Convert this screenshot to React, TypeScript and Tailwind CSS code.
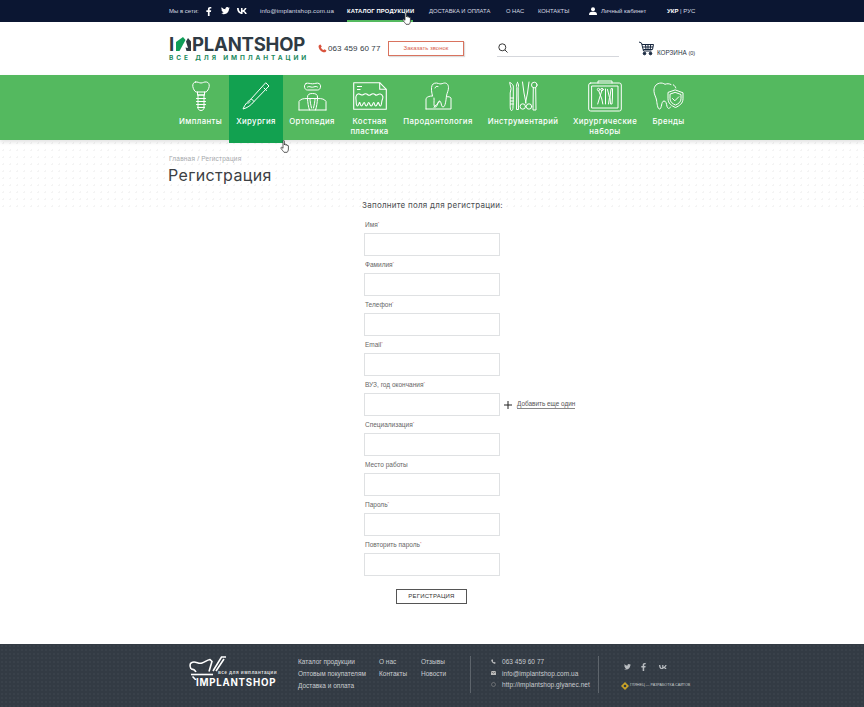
import React from "react";

const S = { fill: "none", stroke: "#fff", strokeWidth: 1, strokeLinecap: "round" as const, strokeLinejoin: "round" as const };

const Fb = ({ c = "#fff", h = 10 }: { c?: string; h?: number }) => (
  <svg width={h * 0.6} height={h} viewBox="0 0 6 10"><path fill={c} d="M4 10V5.500h1.500L5.800 3.700H4V2.600c0-.5.2-.9.9-.9h1V.1C5.700.1 5.100 0 4.500 0 3.100 0 2.100.9 2.100 2.400v1.300H.4v1.800h1.700V10z" /></svg>
);
const Tw = ({ c = "#fff", w = 9 }: { c?: string; w?: number }) => (
  <svg width={w} height={w * 0.82} viewBox="0 0 24 20"><path fill={c} d="M24 2.400a9.800 9.800 0 0 1-2.800.8A4.900 4.900 0 0 0 23.300.5a9.800 9.800 0 0 1-3.100 1.200 4.900 4.900 0 0 0-8.400 4.500A14 14 0 0 1 1.700.9a4.900 4.900 0 0 0 1.500 6.600 4.900 4.900 0 0 1-2.200-.6c0 2.400 1.700 4.400 3.900 4.900a4.900 4.900 0 0 1-2.200.1 4.900 4.900 0 0 0 4.600 3.400A9.900 9.900 0 0 1 0 17.300 14 14 0 0 0 7.500 19.500c9.100 0 14.300-7.700 14-14.600A10 10 0 0 0 24 2.400z" /></svg>
);
const Vk = ({ c = "#fff", w = 10 }: { c?: string; w?: number }) => (
  <svg width={w} height={w * 0.6} viewBox="0 0 20 12"><path fill={c} d="M10.900 12C4.100 12 .2 7.500 0 0h3.400c.1 5.500 2.600 7.800 4.500 8.300V0h3.200v4.700c2-.2 4-2.400 4.700-4.700H19c-.5 2.900-2.700 5-4.200 5.900 1.500.7 4 2.600 4.900 6.100h-3.500c-.8-2.300-2.600-4.100-5.100-4.400V12z" /></svg>
);

const ImplantIcon = () => (
  <svg width="18" height="30" viewBox="0 0 18 30" {...S}>
    <path d="M3.500 1C1.500 1.300.5 3 .8 5.500 1.200 8 2.800 10.500 4 11h10c1.200-.5 2.800-3 3.200-5.500C17.500 3 16.500 1.300 14.500 1 12 .6 11 2 9 2S6 .6 3.500 1z" />
    <path d="M5.500 11v3h7v-3M5.500 14h7" />
    <path d="M6 14v13c0 1 1 2.500 3 2.500s3-1.500 3-2.500V14" />
    <path d="M4.500 17.500h9M4.500 20.500h9M4.500 23.500h9M5.500 26.500h7" />
  </svg>
);
const ScalpelIcon = () => (
  <svg width="28" height="28" viewBox="0 0 28 28" {...S}>
    <path d="M24 1l3 3-15 15.500-2.500-2.500z" />
    <path d="M22 6l2.500 2.500" />
    <path d="M9.500 17C6 19 3 22 1 27c4-1 8-3.500 11-7.500" />
    <path d="M6 21.500l2-2" />
  </svg>
);
const OrthoIcon = () => (
  <svg width="29" height="29" viewBox="0 0 29 29" {...S}>
    <path d="M8 1.500c2-1 4 .3 6.500.3S19 .5 21 1.500c2 1 1.800 3.500 1 5-.5 1-1.500 1.500-2.500 1.500h-10c-1 0-2-.5-2.500-1.500-.8-1.500-1-4 1-5z" />
    <path d="M9.500 5c2-1.300 3 .4 5 .2s3-1.500 5-.2" />
    <path d="M9.500 15c0-2.500 1.500-3.500 5-3.500s5 1 5 3.500v1.500h-10z" />
    <path d="M1 28v-8.500c1.500-2.500 4-3 8.500-3 .3 4 .7 8 2 11.500M28 28v-8.500c-1.500-2.500-4-3-8.500-3-.3 4-.7 8-2 11.500M1 28h27" />
    <path d="M12 16.500c0 3 .8 6.500 1.500 9.500M17 16.500c0 3-.8 6.500-1.500 9.500" />
  </svg>
);
const BoneIcon = () => (
  <svg width="34" height="28" viewBox="0 0 34 28" fill="none" stroke="#fff" strokeWidth="1.100" strokeLinejoin="round">
    <path d="M.7.7h26l6.600 6.600v20H.7z" />
    <path d="M26.700.7v6.600h6.600M4 4.500h5M4 7.500h3.500" />
    <path d="M3 14.500c.7-3 3-3 4.500-2s2 .8 3 0 3-1 4 0 2.500.8 3.500 0 3-1 4 0 2 .8 3 0 3.800-1 4.800 2c.5 2-.8 3-1 5-.2 2-.5 4.500-1.500 4.500s-1.300-3-2-3.500-1.200 3.500-2.600 3.500-1-3.500-2-3.500-1 3.500-2.500 3.500-1.500-3.500-2.500-3.500-1 3.500-2.500 3.500-1-3.500-2-3.500-1.500 3.500-2.800 3.500-1-3-1.700-3.500-1 3.500-2 3.500-1.500-2.500-1.500-4.500S2.500 16.500 3 14.500z" />
  </svg>
);
const ParoIcon = () => (
  <svg width="27" height="28" viewBox="0 0 27 28" {...S}>
    <path d="M1 27V16.500c1.500-2 4-2.500 6-2.500M1 27h25V16c-1-1.200-2.500-1.500-4-1.200" />
    <path d="M7.500 14C6.500 10 6 6 7 3.500 8 1 11 .5 13.500 1.500c2 .8 3 .3 5-.3 2.800-.8 5 1 5 4.500 0 3-1.500 5-2 8.300-.5 3.500-1 11-3.500 11-2 0-1.500-6-3.500-6s-2 6-4 6c-2.500 0-1-6-1.500-9" />
    <path d="M10 6c.5-1.500 1.500-2 3-1.500" />
    <path d="M9 25.500c1-2.500 4-3 5.500-6" />
  </svg>
);
const ToolsIcon = () => (
  <svg width="29" height="30" viewBox="0 0 29 30" {...S}>
    <path d="M1 1.500c1 .3 2 1.300 2.500 2l.8 1.500v10l-.3 11c0 2-.5 3.500-1.500 3.500s-1.300-2-1.300-4V12L2 8z" />
    <path d="M1.500 17h3M1.500 20h3M1.500 23h3" />
    <path d="M8.500 1.500c1.200 1.500 1.300 3.500.7 5v7.500l.3 14.500H7.500L7.800 14V6.500C7.300 5 7.500 3 8.500 1.500z" />
    <path d="M13.500 1l1.500 11 2 10M20 1l-1.500 11-2 10" />
    <circle cx="13.800" cy="25.500" r="2.700" /><circle cx="20" cy="25.500" r="2.700" />
    <circle cx="25.300" cy="4" r="2.800" /><path d="M24.300 7l-.3 22h3l-.3-22" />
  </svg>
);
const KitIcon = () => (
  <svg width="34" height="32" viewBox="0 0 34 32" {...S}>
    <rect x=".7" y="3" width="32.600" height="28" rx="2" />
    <path d="M10 3V1h14v2" />
    <rect x="4" y="6" width="26" height="22" />
    <circle cx="10.500" cy="9.500" r="1.200" /><circle cx="14" cy="9.500" r="1.200" />
    <path d="M10.800 11l3 8 1 5M13.700 11l-2.500 8-1.500 5M17.500 9v15M19.500 9.500l2 8-1 6.500M24.500 9v8l-.5 7h-1.500l-.5-7 1-8z" />
  </svg>
);
const BrandIcon = () => (
  <svg width="31" height="28" viewBox="0 0 31 28" {...S}>
    <path d="M18 2.500C16 1.500 14 1.500 12 2.300 10.500 1.300 8.500.7 6.500 1.200 2.500 2 .7 5.500 1 9.500c.3 3.500 2 5.500 2.500 8.500.5 3 1 9 3 9 2.500 0 1.500-8 4.500-8 2 0 2.500 2.500 3 5.500 1 2.500 2.500 2.500 3.500.5" />
    <path d="M22.800 6c-.5-1.500-1.300-2.500-2.500-3.200" />
    <path d="M22.500 8l7.500 2.800v6c0 4.500-3.500 7-7.500 8.700-4-1.700-7.500-4.200-7.500-8.700v-6z" />
    <path d="M22.500 10.500l5.500 2v4.300c0 3-2.500 5-5.500 6.300-3-1.300-5.500-3.300-5.500-6.300v-4.300z" />
    <path d="M19.500 16.500l2.300 2.300 4-4" />
  </svg>
);
const Hand = () => (
  <svg width="11" height="13" viewBox="0 0 11 13">
    <path fill="#fff" stroke="#333" strokeWidth=".8" d="M3 1.200c0-.9 1.400-.9 1.400 0V5l.1-.6c0-.7 1.200-.7 1.300 0v.8c0-.7 1.200-.7 1.300 0v.6c0-.7 1.300-.7 1.300.2V9c0 1.500-.8 2.800-1.200 3.300H4c-.5-.8-2.500-3-3-4-.4-.8.500-1.300 1.100-.8L3 8.300z" />
  </svg>
);

const navItems: { label: React.ReactNode; w: string; icon: React.ReactNode; active?: boolean }[] = [
  { label: "Импланты", w: "w-[57px]", icon: <ImplantIcon /> },
  { label: "Хирургия", w: "w-[54px]", icon: <ScalpelIcon />, active: true },
  { label: "Ортопедия", w: "w-[58px]", icon: <OrthoIcon /> },
  { label: <>Костная<br />пластика</>, w: "w-[57px]", icon: <BoneIcon /> },
  { label: "Пародонтология", w: "w-[80px]", icon: <ParoIcon /> },
  { label: "Инструментарий", w: "w-[90px]", icon: <ToolsIcon /> },
  { label: <>Хирургические<br />наборы</>, w: "w-[74px]", icon: <KitIcon /> },
  { label: "Бренды", w: "w-[53px]", icon: <BrandIcon /> },
];

const fields: { label: string; star?: boolean; add?: boolean }[] = [
  { label: "Имя", star: true },
  { label: "Фамилия", star: true },
  { label: "Телефон", star: true },
  { label: "Email", star: true },
  { label: "ВУЗ, год окончания", star: true, add: true },
  { label: "Специализация", star: true },
  { label: "Место работы" },
  { label: "Пароль", star: true },
  { label: "Повторить пароль", star: true },
];

export default function App() {
  return (
    <div className="w-[864px] h-[707px] overflow-hidden bg-white flex flex-col font-['Liberation_Sans',sans-serif] relative">
      {/* top bar */}
      <div className="h-[22px] bg-[#0b1632] shrink-0 flex items-center pl-[169px] text-[#d6dae3] text-[6px]">
        <span className="w-[30px]">Мы в сети:</span>
        <span className="w-[16px] ml-[2px] flex justify-center"><Fb h={9} /></span>
        <span className="w-[16px] flex justify-center"><Tw w={9} /></span>
        <span className="w-[18px] flex justify-center"><Vk w={10} /></span>
        <span className="ml-[9px] w-[87px] text-[6.200px] tracking-[0.1px]">info@implantshop.com.ua</span>
        <span className="relative w-[82px] h-[22px] flex items-center font-bold text-white text-[5.800px] tracking-[0.15px]">
          КАТАЛОГ ПРОДУКЦИИ
          <span className="absolute left-0 bottom-0 w-[66px] h-[2px] bg-[#54b95f]" />
        </span>
        <span className="w-[77px] text-[5.800px]">ДОСТАВКА И ОПЛАТА</span>
        <span className="w-[32px] text-[5.800px]">О НАС</span>
        <span className="w-[51px] text-[5.800px]">КОНТАКТЫ</span>
        <svg width="8" height="8" viewBox="0 0 8 8" className="mr-[4px]"><circle cx="4" cy="2.200" r="2" fill="#fff" /><path fill="#fff" d="M0 8c0-2.500 1-3 3-3.300h2C7 5 8 5.500 8 8z" /></svg>
        <span className="w-[66px] text-[6px]">Личный кабинет</span>
        <span className="text-[6px] text-[#d6dae3]"><b className="text-white">УКР</b> | РУС</span>
      </div>

      {/* header */}
      <div className="h-[53px] shrink-0 flex items-center pl-[169px]">
        <div className="w-[149px] flex flex-col mt-[1px]">
          <div className="flex items-center h-[16px] text-[#2f3b44] font-['Inter',sans-serif] font-bold text-[18.500px] leading-none tracking-[-0.2px]">
            <span>I</span>
            <svg width="15" height="14" viewBox="0 0 15 14" className="ml-[2px] mr-[1px]">
              <path fill="#0f9d58" d="M0 14V5L7 0l2.500 3L3.500 14z" />
              <path fill="#2f3b44" d="M10 4.500L12 1l3 3.500V14h-4.500l-1-3.500L12 11z" />
            </svg>
            <span>PLANTSHOP</span>
          </div>
          <div className="text-[#1c8a60] font-bold text-[6.500px] leading-[8px] mt-[2px] tracking-[2.900px] whitespace-nowrap font-['Inter',sans-serif]">ВСЕ ДЛЯ ИМПЛАНТАЦИИ</div>
        </div>
        <svg width="9" height="9" viewBox="0 0 24 24" className="mr-[1px]"><path fill="#d9533d" d="M6.600 1.500l3.500 5-2.300 2.500c1 2.800 4.400 6.300 7.200 7.300l2.500-2.300 5 3.500c-.5 3-3 5-5.500 4.800C9 21.500 2.500 14 1.500 7 1.300 4.500 3.500 2 6.600 1.500z" /></svg>
        <span className="w-[60px] text-[8px] text-[#33393f] tracking-[0.1px]">063 459 60 77</span>
        <span className="w-[76px] h-[15px] border border-[#d9735f] shadow-[1px_1px_1px_#ddd] flex items-center justify-center text-[6px] text-[#d9654f]">Заказать звонок</span>
        <div className="ml-[33px] w-[122px] h-[16px] border-b border-[#d5d7dc] flex items-center pl-[1px]">
          <svg width="10" height="10" viewBox="0 0 10 10" fill="none" stroke="#222" strokeWidth=".9"><circle cx="4.300" cy="4.300" r="3.500" /><path d="M7 7l2.500 2.500" /></svg>
        </div>
        <svg width="15" height="15" viewBox="0 0 15 15" className="ml-[20px]" fill="none" stroke="#15253d" strokeWidth="1">
          <path d="M0 1l2.500 1 2 8h8" />
          <path d="M3 3.500h11.500l-1 5H4.300M6.500 3.500l.5 5M9 3.500v5M11.700 3.500l-.5 5M3.500 6h10.500" />
          <circle cx="5.500" cy="12.500" r="1.300" fill="#15253d" /><circle cx="11.500" cy="12.500" r="1.300" fill="#15253d" />
        </svg>
        <span className="ml-[3px] mt-[8px] text-[6.300px] text-[#2a3444] whitespace-nowrap">КОРЗИНА <span className="text-[5.500px]">(0)</span></span>
      </div>

      {/* nav */}
      <div className="h-[65px] bg-[#54b95f] shrink-0 flex pl-[172px] shadow-[0_2px_4px_rgba(0,0,0,0.12)] relative z-10">
        {navItems.map((n, i) => (
          <div key={i} className={`${n.w} shrink-0 flex flex-col items-center ${n.active ? "bg-[#12a150] h-[68px]" : "h-[65px]"}`}>
            <div className="h-[38px] flex items-center justify-center mt-[2px]">{n.icon}</div>
            <div className="text-white text-center font-['Inter',sans-serif] font-medium text-[7.800px] leading-[10px] tracking-[0.35px] whitespace-nowrap mt-[1px]">{n.label}</div>
          </div>
        ))}
      </div>

      {/* main */}
      <div className="flex-1 relative flex flex-col">
        <div className="absolute inset-x-0 top-0 h-[70px] bg-[radial-gradient(#f4f4f4_1px,transparent_1px)] bg-[length:7px_7px]" />
        <div className="relative pl-[169px] pt-[15px]">
          <div className="text-[6.500px] leading-[8px] text-[#a5a8ab] tracking-[0.2px]">Главная / Регистрация</div>
          <h1 className="text-[16px] leading-[20px] mt-[2px] -ml-[1px] text-[#3c4043] tracking-[0.35px] font-['Inter',sans-serif] font-normal">Регистрация</h1>
        </div>
        <div className="relative pl-[362px] mt-[15px]">
          <div className="text-[8px] leading-[10px] text-[#4a4d50] tracking-[0.25px] font-['Inter',sans-serif]">Заполните поля для регистрации:</div>
          <div className="flex flex-col gap-[4px] mt-[11px] pl-[2px]">
            {fields.map((f) => (
              <div key={f.label} className="flex flex-col h-[36px]">
                <div className="text-[6.500px] leading-[8px] text-[#666] pl-[1px] mb-[4px]">{f.label}{f.star && <sup className="text-[#c66] text-[4px]">*</sup>}</div>
                <div className="flex items-center">
                  <div className="w-[136px] h-[23px] border border-[#dfe1e3] bg-white" />
                  {f.add && (
                    <>
                      <svg width="8" height="8" viewBox="0 0 8 8" className="ml-[4px]"><path d="M4 0v8M0 4h8" stroke="#222" strokeWidth="1" /></svg>
                      <span className="ml-[5px] text-[6.400px] leading-[8px] text-[#555] border-b border-[#888]">Добавить еще один</span>
                    </>
                  )}
                </div>
              </div>
            ))}
          </div>
          <div className="mt-[12px] ml-[34px] w-[71px] h-[15px] border border-[#555] flex items-center justify-center text-[6px] text-[#333] tracking-[0.2px]">РЕГИСТРАЦИЯ</div>
        </div>
      </div>

      {/* footer */}
      <div className="h-[63px] shrink-0 bg-[#333b44] bg-[radial-gradient(#39414a_1px,transparent_1px)] bg-[length:4px_4px] flex pl-[188px] text-[#c9ccd0] text-[6.500px]">
        <div className="w-[110px] pt-[12px] relative">
          <svg width="40" height="24" viewBox="0 0 40 24" fill="none" stroke="#fff" strokeWidth="1.600" className="block">
            <path d="M3 13C1 9 2 6 6 6c3 0 5 2 8 1s5-3 8-3.500l2 2c-1 3-2 7-3 10" />
            <path d="M3 13c2 0 4 1 5 3" />
            <path d="M25 15L33.500 1H38M28 15L36 3" />
            <path d="M3 18.500h22" />
            <path d="M4.500 20.500l3.500 3.500" />
          </svg>
          <div className="absolute left-[30px] top-[26px] text-[4.700px] leading-[6px] font-bold tracking-[0.45px] text-[#ddd] whitespace-nowrap">все для имплантации</div>
          <div className="absolute left-[8px] top-[33px] text-[9.700px] leading-[12px] font-bold tracking-[0.75px] text-white whitespace-nowrap font-['Inter',sans-serif]">IMPLANTSHOP</div>
        </div>
        <div className="w-[81px] pt-[12px] leading-[12px]">
          <div>Каталог продукции</div><div>Оптовым покупателям</div><div>Доставка и оплата</div>
        </div>
        <div className="w-[42px] pt-[12px] leading-[12px]"><div>О нас</div><div>Контакты</div></div>
        <div className="w-[49px] pt-[12px] leading-[12px]"><div>Отзывы</div><div>Новости</div></div>
        <div className="mt-[12px] h-[37px] w-[128px] border-l border-l-[#5d646b] pl-[20px] leading-[11.500px] tracking-[0.05px]">
          <div className="flex items-center gap-[6px]"><svg width="5" height="5" viewBox="0 0 24 24"><path fill="#ccc" d="M6.600 1.500l3.500 5-2.300 2.500c1 2.800 4.400 6.300 7.200 7.300l2.500-2.300 5 3.500c-.5 3-3 5-5.500 4.800C9 21.500 2.500 14 1.500 7 1.300 4.500 3.500 2 6.600 1.500z" /></svg>063 459 60 77</div>
          <div className="flex items-center gap-[6px]"><svg width="5" height="4" viewBox="0 0 5 4"><rect width="5" height="4" fill="#bbb" /><path d="M0 .5l2.500 1.700L5 .5" stroke="#333" strokeWidth=".5" fill="none" /></svg>info@implantshop.com.ua</div>
          <div className="flex items-center gap-[6px]"><svg width="5" height="5" viewBox="0 0 10 10" fill="none" stroke="#999"><circle cx="5" cy="5" r="4" /></svg>http://implantshop.glyanec.net</div>
        </div>
        <div className="mt-[12px] h-[37px] border-l border-l-[#5d646b] pl-[25px] flex flex-col">
          <div className="flex items-center h-[22px]">
            <span className="w-[17px]"><Tw c="#b8bcc0" w={7} /></span>
            <span className="w-[18px]"><Fb c="#b8bcc0" h={8} /></span>
            <span><Vk c="#b8bcc0" w={8} /></span>
          </div>
          <div className="flex items-center -ml-[3px] mt-[4px] text-[3.700px] text-[#c6c9cc] whitespace-nowrap">
            <svg width="8" height="8" viewBox="0 0 8 8" className="mr-[1px]"><path d="M4 0l4 4-4 4-4-4z" fill="#c9a227" /><circle cx="4" cy="4" r="1.300" fill="#333b44" /></svg>
            ГЛЯНЕЦ — РАЗРАБОТКА САЙТОВ
          </div>
        </div>
      </div>

      {/* cursors */}
      <div className="absolute left-[402px] top-[12px] z-20"><Hand /></div>
      <div className="absolute left-[280px] top-[140px] z-20"><Hand /></div>
    </div>
  );
}
